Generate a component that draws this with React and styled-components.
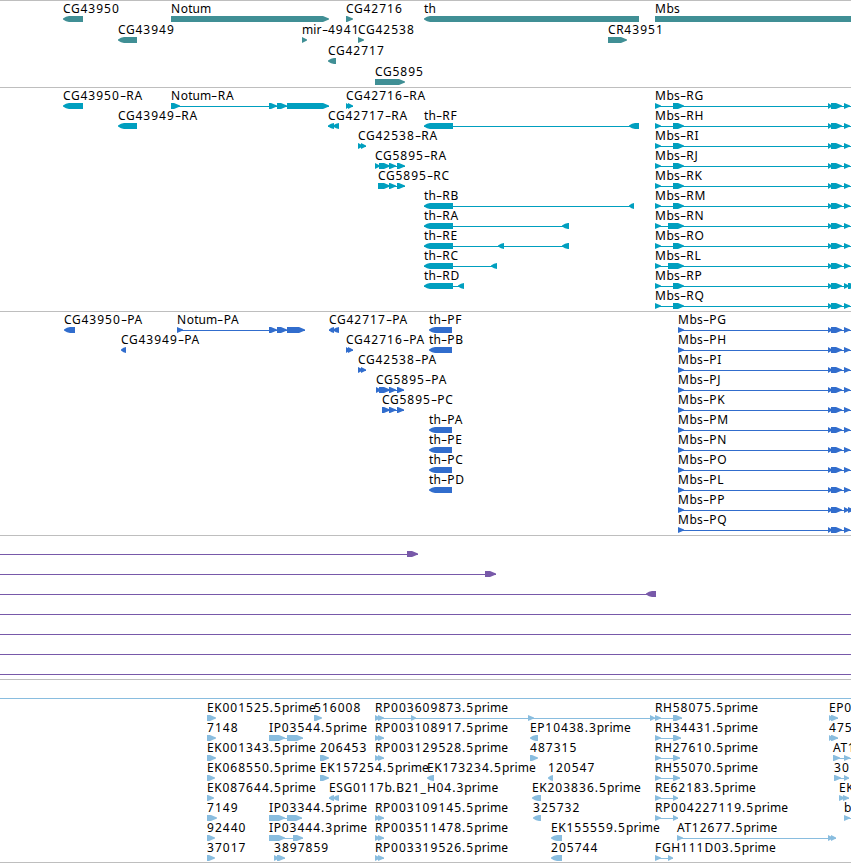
import styled, { createGlobalStyle } from "styled-components";

const WIDTH = 851;

const GlobalStyle = createGlobalStyle`
body{
margin:0;
background:white;
overflow:hidden;
}
`
const Browser = styled.main`
width:${WIDTH}px;
height:863px;
overflow:hidden;
display:flex;
flex-direction:column;
background:white;
font-family:"Noto Sans", "DejaVu Sans", sans-serif;
font-size:12px;
color:black;
`
const TrackContainer = styled.section`
display:flex;
flex-direction:column;
flex:none;
box-sizing:border-box;
height:${({$height})=>$height}px;
padding-top:2px;
border-top:1px solid #bebebe;
color:${({$color})=>$color};
`
const LaneContainer = styled.div`
display:flex;
flex-direction:column;
flex:none;
height:${({$height})=>$height}px;
`
const Labels = styled.div`
position:relative;
height:13px;
flex:none;
z-index:1;
`
// labels start at the genomic position of their feature
const Label = styled.span`
position:absolute;
top:0;
line-height:11px;
white-space:pre;
color:black;
`
const Run = styled.span`
letter-spacing:${({$spacing})=>$spacing}px;
`
const Hyphen = styled.span`
display:inline-block;
width:6.4px;
text-align:center;
transform:scaleX(1.6);
`
const Glyphs = styled.svg`
display:block;
flex:none;
width:${WIDTH}px;
height:6px;
fill:currentColor;
`
const EndRule = styled.div`
flex:none;
height:1px;
background:#bebebe;
`

// r = forward strand, l = reverse strand, spans are [start, end] pairs
const r = (label, x, ...exons) => ({ label, x, strand: 1, exons });
const l = (label, x, ...exons) => ({ label, x, strand: -1, exons });

const genes = [
    [r("Notum", 171, [171, 329]), l("CG43950", 63, [63, 83]), r("CG42716", 346, [346, 353]), l("th", 424, [424, 639]), r("Mbs", 655, [655, 900])],
    [l("CG43949", 118, [118, 137]), r("mir-4941", 302, [302, 307]), r("CG42538", 358, [358, 364]), r("CR43951", 608, [608, 627])],
    [l("CG42717", 328, [328, 336])],
    [r("CG5895", 375, [375, 405])],
];

function mbsTranscript(letter){
    const second = "NL".includes(letter) ? [668, 684] : [673, 684];
    const tail = letter === "P" ? [[844, 849], [848, 856]] : [[844, 850]];
    return r(`Mbs-R${letter}`, 655, [655, 661], second, [828, 832], [831, 842], ...tail, [880, 890]);
}

function mbsProtein(letter){
    const tail = letter === "P" ? [[844, 849], [848, 854]] : [[844, 850]];
    return r(`Mbs-P${letter}`, 678, [678, 684], [828, 832], [831, 842], ...tail, [880, 890]);
}

const mbsLetters = "GHIJKMNOLPQ".split("");

const transcriptRows = [
    [l("CG43950-RA", 63, [63, 83]), r("Notum-RA", 171, [171, 180], [269, 277], [277, 287], [287, 329]), r("CG42716-RA", 346, [346, 350], [348, 353])],
    [l("CG43949-RA", 118, [118, 137]), l("CG42717-RA", 328, [328, 334], [333, 339]), l("th-RF", 424, [424, 453], [629, 639])],
    [r("CG42538-RA", 358, [358, 363], [361, 366])],
    [r("CG5895-RA", 375, [375, 380], [379, 390], [389, 396], [397, 405])],
    [r("CG5895-RC", 378, [378, 390], [389, 396], [397, 405])],
    [l("th-RB", 424, [424, 453], [629, 634])],
    [l("th-RA", 424, [424, 453], [562, 569])],
    [l("th-RE", 424, [424, 453], [498, 504], [562, 569])],
    [l("th-RC", 424, [424, 453], [491, 497])],
    [l("th-RD", 424, [424, 453], [458, 464])],
    [],
];

const proteinRows = [
    [l("CG43950-PA", 64, [64, 75]), r("Notum-PA", 177, [177, 183], [269, 277], [277, 287], [287, 305]), l("CG42717-PA", 329, [329, 334], [333, 339]), l("th-PF", 429, [429, 452])],
    [l("CG43949-PA", 121, [121, 126]), r("CG42716-PA", 346, [346, 350], [348, 353]), l("th-PB", 429, [429, 452])],
    [r("CG42538-PA", 358, [358, 363], [361, 366])],
    [r("CG5895-PA", 376, [376, 381], [379, 390], [389, 396], [397, 404])],
    [r("CG5895-PC", 382, [382, 390], [389, 396], [397, 404])],
    [l("th-PA", 429, [429, 452])],
    [l("th-PE", 429, [429, 452])],
    [l("th-PC", 429, [429, 452])],
    [l("th-PD", 429, [429, 452])],
    [],
    [],
];

const transcripts = transcriptRows.map((row, i) => [...row, mbsTranscript(mbsLetters[i])]);
const proteins = proteinRows.map((row, i) => [...row, mbsProtein(mbsLetters[i])]);

// features that run past both edges of the view
const through = () => r("", 0, [-40, -30], [880, 890]);

const insertions = [
    [r("", 0, [-40, -30], [407, 418])],
    [r("", 0, [-40, -30], [485, 496])],
    [l("", 0, [-40, -30], [646, 656])],
    [through()],
    [through()],
    [through()],
    [through()],
];

const rp = (label) => r(label, 375, [375, 380], [378, 384]);

const ests = [
    [through()],
    [r("EK001525.5prime", 207, [207, 216]), r("516008", 314, [314, 322]),
        r("RP003609873.5prime", 375, [375, 380], [378, 384], [411, 416], [528, 534], [650, 655]),
        r("RH58075.5prime", 655, [655, 661], [673, 682]), r("EP0", 829, [829, 833], [831, 838])],
    [r("7148", 207, [207, 216]), r("IP03544.5prime", 269, [269, 285], [287, 303]), rp("RP003108917.5prime"),
        l("EP10438.3prime", 530, [530, 538]), r("RH34431.5prime", 655, [655, 661], [673, 681]), r("475", 829, [829, 833], [831, 838])],
    [r("EK001343.5prime", 207, [207, 216]), r("206453", 320, [320, 329]), rp("RP003129528.5prime"),
        r("487315", 530, [530, 538]), r("RH27610.5prime", 655, [655, 661], [673, 680]), r("AT1", 833, [833, 840], [844, 850], [880, 890])],
    [r("EK068550.5prime", 207, [207, 215]), r("EK157254.5prime", 320, [320, 329]), l("EK173234.5prime", 427, [427, 434]),
        l("120547", 548, [548, 553]), r("RH55070.5prime", 655, [655, 661], [673, 680]), r("30", 834, [834, 841], [844, 849])],
    [r("EK087644.5prime", 207, [207, 214]), l("ESG0117b.B21_H04.3prime", 329, [329, 334], [333, 339]),
        l("EK203836.5prime", 532, [532, 541]), r("RE62183.5prime", 655, [655, 661], [673, 678]), r("EK", 839, [839, 845], [843, 849])],
    [r("7149", 207, [207, 217]), r("IP03344.5prime", 269, [269, 285], [287, 302]), rp("RP003109145.5prime"),
        l("325732", 533, [533, 541]), r("RP004227119.5prime", 655, [655, 661], [673, 678]), r("b", 844, [844, 850], [880, 890])],
    [r("92440", 207, [207, 215]), r("IP03444.3prime", 269, [269, 285], [293, 303]), rp("RP003511478.5prime"),
        l("EK155559.5prime", 551, [551, 562]), r("AT12677.5prime", 677, [677, 683], [828, 833], [831, 836])],
    [r("37017", 207, [207, 215]), r("3897859", 274, [274, 279], [277, 285]), rp("RP003319526.5prime"),
        l("205744", 551, [551, 562]), r("FGH111D03.5prime", 655, [655, 661], [668, 673])],
];

const tracks = [
    { name: "genes", color: "#408f95", height: 87, lane: 21, rows: genes },
    { name: "transcripts", color: "#009fbf", height: 224, lane: 20, rows: transcripts },
    { name: "proteins", color: "#316dcd", height: 224, lane: 20, rows: proteins },
    { name: "insertions", color: "#7859a9", height: 144, lane: 20, rows: insertions },
    { name: "ests", color: "#89bddf", height: 183, lane: 20, rows: ests },
];

function exonPoints([start, end], strand){
    const head = Math.min(6, end - start);
    if (strand > 0)
        return `${start},0 ${end - head},0 ${end},2.5 ${end},3.5 ${end - head},6 ${start},6`;
    return `${end},0 ${start + head},0 ${start + head / 2},0.8 ${start},2.5 ${start},3.5 ${start + head / 2},5.2 ${start + head},6 ${end},6`;
}

function Feature({feature}){
    const { exons, strand } = feature;
    const start = exons[0][0];
    const end = exons[exons.length - 1][1];

    return (
        <g>
            {exons.length > 1 && <rect x={start} y={3} width={end - start} height={1}/>}
            {exons.map((exon, i) => <polygon key={i} points={exonPoints(exon, strand)}/>)}
        </g>
    )
}

// digits are set wider than letters
function LabelText({text}){
    return text.match(/[a-z]+|[A-Z]+|-|[^a-zA-Z-]+/g).map((run, i) => {
        if (run === "-")
            return <Hyphen key={i}>{run}</Hyphen>;
        if (/[a-z]/.test(run))
            return <Run key={i} $spacing={0.1}>{run}</Run>;
        if (/[A-Z]/.test(run))
            return <Run key={i} $spacing={0.65}>{run}</Run>;
        return <Run key={i} $spacing={1.03}>{run}</Run>;
    })
}

function Lane({features, height}){
    return (
        <LaneContainer $height={height}>
            <Labels>
                {features.filter((f) => f.label).map((f) => (
                    <Label key={f.label} style={{left: f.x}}>
                        <LabelText text={f.label}/>
                    </Label>
                ))}
            </Labels>
            <Glyphs viewBox={`0 0 ${WIDTH} 6`}>
                {features.map((f, i) => <Feature key={i} feature={f}/>)}
            </Glyphs>
        </LaneContainer>
    )
}

export default function App(){
    return (
        <>
            <GlobalStyle/>
            <Browser>
                {tracks.map((track) => (
                    <TrackContainer key={track.name} $color={track.color} $height={track.height}>
                        {track.rows.map((row, i) => <Lane key={i} features={row} height={track.lane}/>)}
                    </TrackContainer>
                ))}
                <EndRule/>
            </Browser>
        </>
    )
}
